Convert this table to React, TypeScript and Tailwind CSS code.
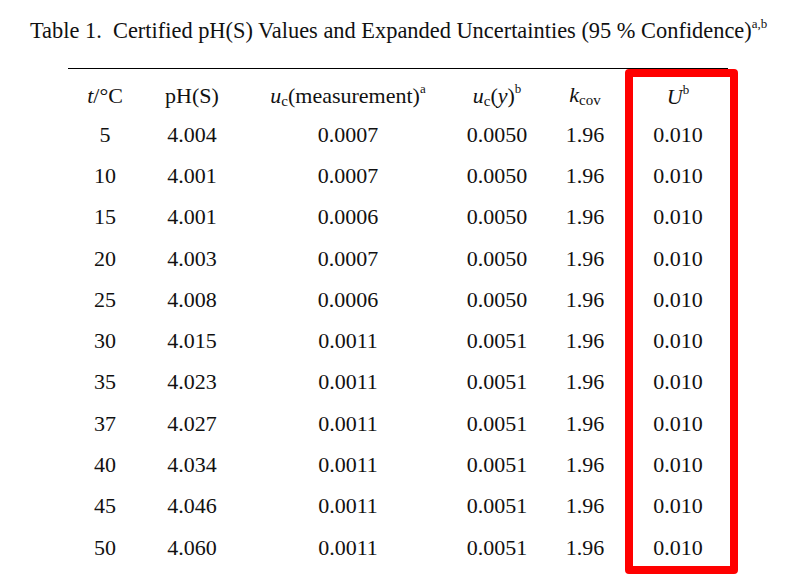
import React from "react";

const rows: [string, string, string, string][] = [
  ["5", "4.004", "0.0007", "0.0050"],
  ["10", "4.001", "0.0007", "0.0050"],
  ["15", "4.001", "0.0006", "0.0050"],
  ["20", "4.003", "0.0007", "0.0050"],
  ["25", "4.008", "0.0006", "0.0050"],
  ["30", "4.015", "0.0011", "0.0051"],
  ["35", "4.023", "0.0011", "0.0051"],
  ["37", "4.027", "0.0011", "0.0051"],
  ["40", "4.034", "0.0011", "0.0051"],
  ["45", "4.046", "0.0011", "0.0051"],
  ["50", "4.060", "0.0011", "0.0051"],
];

const c1 = "w-[74px] text-center";
const c2 = "w-[100px] text-center";
const c3 = "w-[212px] text-center";
const c4 = "w-[86px] text-center";
const c5 = "w-[90px] text-center";
const c6 = "w-[96px] text-center";

const Sup = ({ children }: { children: React.ReactNode }) => (
  <span className="text-[13px] align-[10px]">{children}</span>
);
const Sub = ({ children }: { children: React.ReactNode }) => (
  <span className="text-[15px] align-[-3px]">{children}</span>
);

export default function App() {
  return (
    <div
      className="relative w-[792px] h-[580px] bg-white text-[#111] overflow-hidden"
      style={{ fontFamily: '"Liberation Serif", "Times New Roman", serif' }}
    >
      <div className="h-[68px] pt-[17px] pl-[30px]">
        <div className="text-[22.4px] leading-[26px] whitespace-nowrap">
          Table 1.&nbsp; Certified pH(S) Values and Expanded Uncertainties (95 % Confidence)
          <span className="text-[13px] leading-none align-[10px]">a,b</span>
        </div>
      </div>
      <div className="ml-[68px] w-[660px] border-t-[1.5px] border-black text-[22px]">
        <div className="flex h-[45px] items-center pt-[8px] leading-none">
          <div className={c1}>
            <i>t</i>/°C
          </div>
          <div className={c2}>pH(S)</div>
          <div className={c3}>
            <i>u</i>
            <Sub>c</Sub>(measurement)
            <Sup>a</Sup>
          </div>
          <div className={c4}>
            <i>u</i>
            <Sub>c</Sub>(<i>y</i>)
            <Sup>b</Sup>
          </div>
          <div className={c5}>
            <i>k</i>
            <Sub>cov</Sub>
          </div>
          <div className={c6}>
            <i>U</i>
            <Sup>b</Sup>
          </div>
        </div>
        {rows.map((r, i) => (
          <div key={i} className="flex h-[41.3px] items-center leading-none">
            <div className={c1}>{r[0]}</div>
            <div className={c2}>{r[1]}</div>
            <div className={c3}>{r[2]}</div>
            <div className={c4}>{r[3]}</div>
            <div className={c5}>1.96</div>
            <div className={c6}>0.010</div>
          </div>
        ))}
      </div>
      <div className="absolute left-[625px] top-[69px] w-[113px] h-[505px] border-[8px] border-[#ff0000] rounded-[4px]" />
    </div>
  );
}
